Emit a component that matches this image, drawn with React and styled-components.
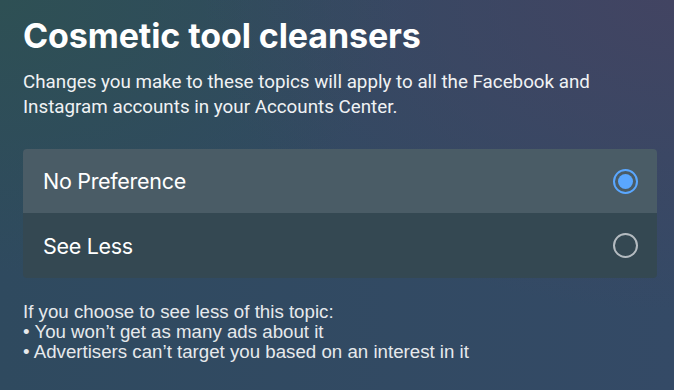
import React, { useState } from "react";
import styled, { createGlobalStyle } from "styled-components";

const GlobalStyle = createGlobalStyle`
    html, body {
        margin: 0;
        padding: 0;
        height: 100%;
    }
    body {
        width: 674px;
        height: 390px;
        overflow: hidden;
        font-family: "Roboto", "Liberation Sans", sans-serif;
    }
`;

const Page = styled.div`
    box-sizing: border-box;
    width: 674px;
    height: 390px;
    padding: 14px 17px 0 23px;
    color: #ffffff;
    background:
        radial-gradient(ellipse 70% 80% at 100% 0%, rgba(66, 68, 98, 1) 0%, rgba(66, 68, 98, 0) 100%),
        radial-gradient(ellipse 60% 70% at 0% 0%, rgba(46, 80, 84, 1) 0%, rgba(46, 80, 84, 0) 100%),
        linear-gradient(90deg, #2f4a5f 0%, #344a66 100%);
`;

const Title = styled.h1`
    margin: 0;
    font-family: "Inter", "Roboto", sans-serif;
    font-size: 34px;
    font-weight: 700;
    letter-spacing: -0.1px;
    line-height: 44px;
`;

const Intro = styled.p`
    margin: 12px 0 0;
    font-family: "Roboto", sans-serif;
    font-size: 18.8px;
    line-height: 25px;
    color: #f0f2f4;
`;

const Card = styled.div`
    margin-top: 29px;
    border-radius: 4px;
    overflow: hidden;
    display: flex;
    flex-direction: column;
`;

const Row = styled.label`
    display: flex;
    align-items: center;
    justify-content: space-between;
    height: ${(p) => (p.$first ? 64 : 65)}px;
    padding: 0 19px 0 20px;
    background: ${(p) => (p.$active ? "#4a5c66" : "#344852")};
    cursor: pointer;
`;

const RowLabel = styled.span`
    font-family: "Inter", "Roboto", sans-serif;
    font-size: 21.5px;
    letter-spacing: -0.3px;
    color: #ffffff;
`;

const Radio = styled.span`
    box-sizing: border-box;
    width: 25px;
    height: 25px;
    border-radius: 50%;
    border: 2px solid ${(p) => (p.$checked ? "#5aa7ff" : "#b4bbc0")};
    display: flex;
    align-items: center;
    justify-content: center;

    &::after {
        content: "";
        display: ${(p) => (p.$checked ? "block" : "none")};
        width: 15px;
        height: 15px;
        border-radius: 50%;
        background: #5aa7ff;
    }
`;

const Notes = styled.div`
    margin-top: 24px;
    font-family: "Liberation Sans", Arial, sans-serif;
    font-size: 18.7px;
    line-height: 20px;
    color: #e6e9ec;
`;

const options = ["No Preference", "See Less"];

const App = () => {
    const [selected, setSelected] = useState(0);

    return (
        <Page>
            <GlobalStyle />
            <Title>Cosmetic tool cleansers</Title>
            <Intro>
                Changes you make to these topics will apply to all the Facebook and
                <br />
                Instagram accounts in your Accounts Center.
            </Intro>

            <Card>
                {options.map((opt, i) => (
                    <Row key={opt} $first={i === 0} $active={i === 0} onClick={() => setSelected(i)}>
                        <RowLabel>{opt}</RowLabel>
                        <Radio $checked={selected === i} />
                    </Row>
                ))}
            </Card>

            <Notes>
                <div>If you choose to see less of this topic:</div>
                <div>• You won’t get as many ads about it</div>
                <div>• Advertisers can’t target you based on an interest in it</div>
            </Notes>
        </Page>
    );
};

export default App;
